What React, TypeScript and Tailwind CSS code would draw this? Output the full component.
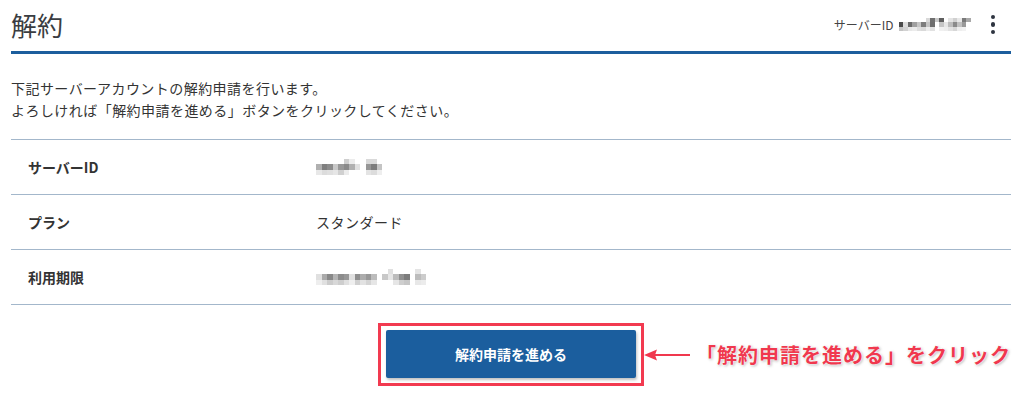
import React from 'react';

const FONT = "font-['Noto_Sans_CJK_JP','Noto_Sans',sans-serif]";

// pixelated placeholders for masked values
const W = '#ffffff';
const HEADER_ID = [
  [W, W, W, W, W, W, '#d8d8d8', '#6f6f6f', '#c9c9c9', '#5e5e5e', W, '#e4e4e4', '#d0d0d0', '#e8e8e8', '#7a7a7a', '#a9a9a9'],
  ['#4a4a4a', '#dcdcdc', '#6a6a6a', '#a0a0a0', '#c6c6c6', '#7c7c7c', '#c3c3c3', '#6d6d6d', W, '#c5c5c5', '#e6e6e6', '#bcbcbc', '#8a8a8a', '#c0c0c0', '#999999', W],
  ['#c4c4c4', '#d2d2d2', '#e7e7e7', '#ececec', '#dedede', '#d9d9d9', '#ececec', '#e1e1e1', W, '#f0f0f0', '#ededed', '#e2e2e2', '#d7d7d7', '#eeeeee', '#f2f2f2', W],
];

const ROW_ID = [
  [W, W, W, W, W, '#cfcfcf', '#ececec', W, W, '#d9d9d9', '#d9d9d9', W],
  ['#b0b0b0', '#7f7f7f', '#8c8c8c', '#c8c8c8', '#989898', '#8a8a8a', '#b0b0b0', '#e0e0e0', W, '#969696', '#7c7c7c', '#c4c4c4'],
  ['#e8e8e8', '#dcdcdc', '#e0e0e0', '#e6e6e6', '#d0d0d0', '#ececec', W, W, W, '#e4e4e4', '#dcdcdc', '#eeeeee'],
];

const ROW_DATE = [
  [W, W, W, W, W, W, W, W, W, W, W, W, W, '#e0e0e0', W, W, W, W, '#e4e4e4', W],
  ['#e0e0e0', '#aaaaaa', '#888888', '#b4b4b4', '#8c8c8c', '#989898', '#e0e0e0', '#8e8e8e', '#acacac', '#989898', '#bcbcbc', W, '#c8c8c8', '#e6e6e6', '#bcbcbc', '#909090', '#7c7c7c', W, '#bcbcbc', '#cccccc'],
  ['#eeeeee', '#e0e0e0', '#cccccc', '#d8d8d8', '#cecece', '#e0e0e0', '#efefef', '#d0d0d0', '#e2e2e2', '#d4d4d4', '#e6e6e6', W, W, W, '#e6e6e6', '#cecece', '#c6c6c6', W, '#e8e8e8', '#ececec'],
];

function Mosaic({ rows, cell = 5 }: { rows: string[][]; cell?: number }) {
  return (
    <div className="flex flex-col">
      {rows.map((row, i) => (
        <div key={i} className="flex">
          {row.map((c, j) => (
            <span key={j} style={{ width: cell, height: cell, background: c }} />
          ))}
        </div>
      ))}
    </div>
  );
}

function InfoRow({ label, children }: { label: string; children: React.ReactNode }) {
  return (
    <div className="grid grid-cols-[305px_1fr] items-center h-[55px] border-b border-[#a3b7cb]">
      <div className="pl-[17px] text-[14px] font-bold text-[#333]">{label}</div>
      <div className="text-[14px] tracking-[0.5px] text-[#333]">{children}</div>
    </div>
  );
}

export default function App() {
  return (
    <div className={`${FONT} w-[1030px] h-[410px] bg-white pl-[11px] pr-[19px] pt-[5px]`}>
      {/* Header */}
      <div className="flex items-center justify-between border-b-[3px] border-[#1c5e9d] pb-[7px]">
        <h1 className="text-[26px] leading-[39px] text-[#3a3d42] font-normal">解約</h1>
        <div className="flex items-center">
          <span className="text-[12px] text-[#444] mr-[5px]">サーバーID</span>
          <Mosaic rows={HEADER_ID} cell={4.5} />
          <div className="ml-[20px] mr-[16px] flex flex-col gap-[3px]">
            <span className="w-[4.5px] h-[4.5px] rounded-full bg-[#2e3440]" />
            <span className="w-[4.5px] h-[4.5px] rounded-full bg-[#2e3440]" />
            <span className="w-[4.5px] h-[4.5px] rounded-full bg-[#2e3440]" />
          </div>
        </div>
      </div>

      {/* Description */}
      <div className="mt-[23px] text-[14px] leading-[22px] tracking-[0.45px] text-[#333]">
        <p>下記サーバーアカウントの解約申請を行います。</p>
        <p>よろしければ「解約申請を進める」ボタンをクリックしてください。</p>
      </div>

      {/* Detail table */}
      <div className="mt-[18px] border-t border-[#a3b7cb]">
        <InfoRow label="サーバーID">
          <Mosaic rows={ROW_ID} cell={5.5} />
        </InfoRow>
        <InfoRow label="プラン">スタンダード</InfoRow>
        <InfoRow label="利用期限">
          <Mosaic rows={ROW_DATE} cell={5.5} />
        </InfoRow>
      </div>

      {/* Action */}
      <div className="flex justify-center mt-[18px]">
        <div className="relative border-[3px] border-[#f23a50] px-[5px] pt-[4px] pb-[5px]">
          <button className="w-[250px] h-[48px] rounded-[2px] bg-[#1b5e9e] text-white text-[14px] font-bold shadow-[1px_2px_3px_rgba(0,0,0,0.25)]">
            解約申請を進める
          </button>

          {/* annotation */}
          <div className="absolute left-full top-1/2 -translate-y-1/2 ml-[3px] flex items-center whitespace-nowrap">
            <svg width="46" height="14" viewBox="0 0 46 14">
              <path d="M10 6 L46 6 L46 8 L10 8 Z" fill="#f0384e" />
              <path d="M0 7 L13 1.5 L11 7 L13 12.5 Z" fill="#f0384e" />
            </svg>
            <span className="ml-[6px] text-[20px] font-bold text-[#f0384e] tracking-[1px] [text-shadow:0_0_2px_#fff,0_0_2px_#fff,1px_1px_3px_rgba(0,0,0,0.35)]">
              「解約申請を進める」をクリック
            </span>
          </div>
        </div>
      </div>
    </div>
  );
}
